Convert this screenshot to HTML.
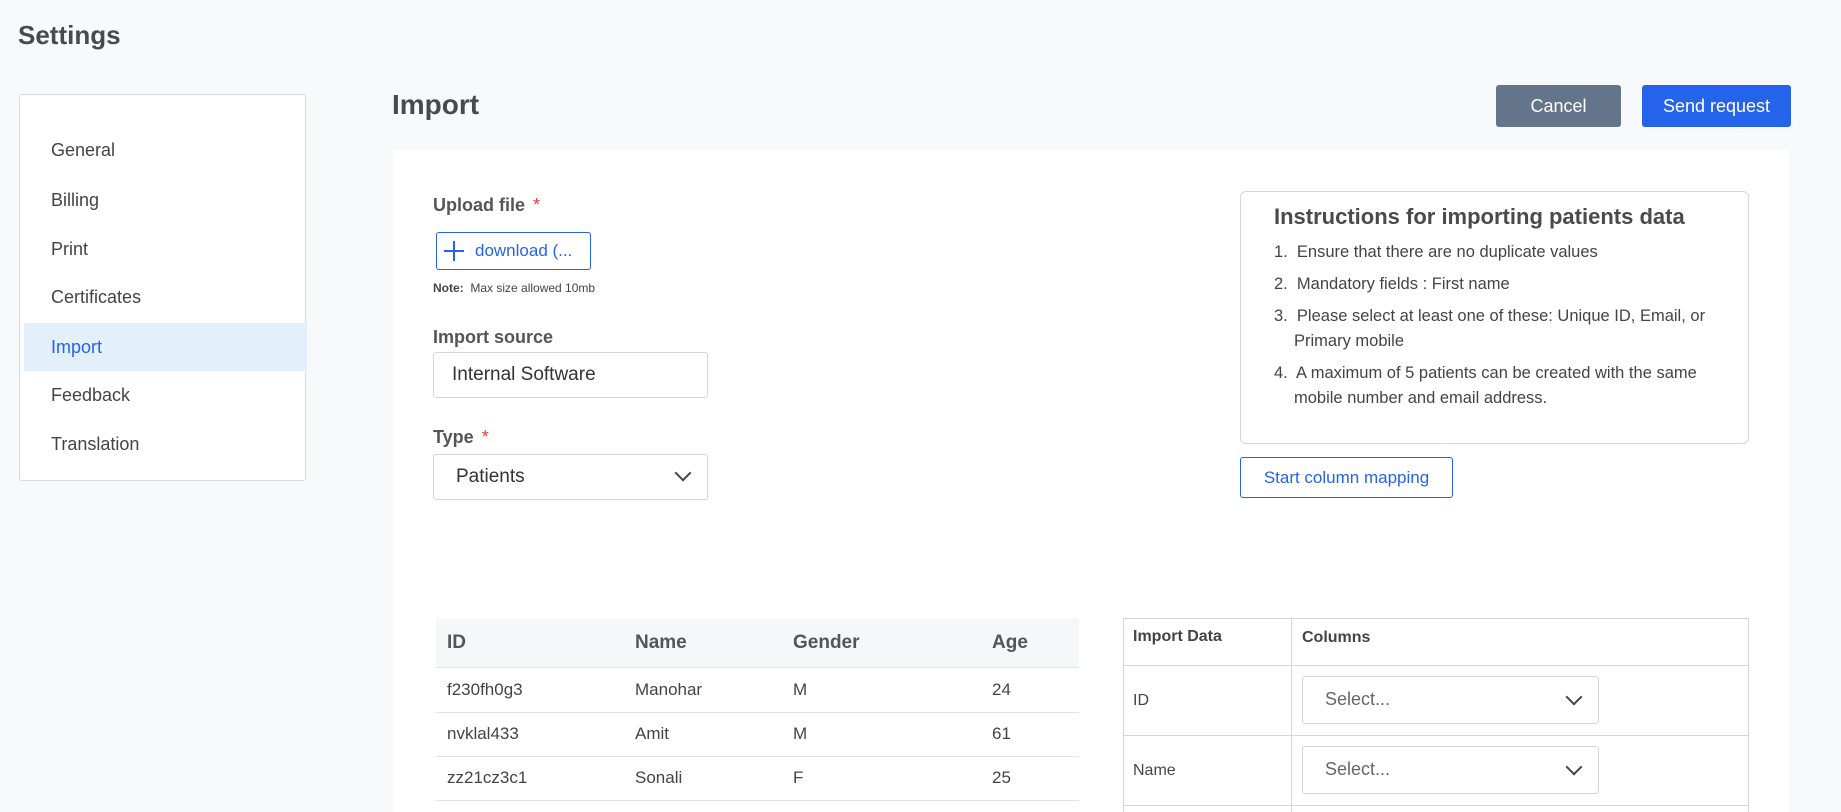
<!DOCTYPE html>
<html><head><meta charset="utf-8"><style>
*{box-sizing:border-box;margin:0;padding:0}
html,body{width:1841px;height:812px;overflow:hidden}
body{background:#f8f9fb;font-family:"Liberation Sans",sans-serif;color:#444;position:relative}
.a{position:absolute}
.menu div{position:absolute;left:4px;width:283px;height:48px;line-height:48px;padding-left:27px;font-size:18px;color:#444}
.lbl{font-size:18px;font-weight:bold;color:#555}
.star{color:#e53e3e;margin-left:8px;font-weight:normal}
.inp{border:1px solid #d6d6d6;border-radius:3px;background:#fff}
.chev{position:absolute;width:12px;height:12px;border-right:2px solid #444;border-bottom:2px solid #444;transform:rotate(45deg)}
</style></head><body>
<div class="a" style="left:18px;top:20px;font-size:26px;font-weight:bold;color:#4a4a4a">Settings</div>
<div class="a" style="left:19px;top:94px;width:287px;height:387px;background:#fff;border:1px solid #d6dbe2;border-radius:3px">
 <div class="menu">
  <div style="top:31px">General</div>
  <div style="top:81px">Billing</div>
  <div style="top:130px">Print</div>
  <div style="top:178px">Certificates</div>
  <div style="top:228px;background:#e3f0fc;color:#2563eb">Import</div>
  <div style="top:276px">Feedback</div>
  <div style="top:325px">Translation</div>
 </div>
</div>
<div class="a" style="left:392px;top:89px;font-size:28px;font-weight:bold;color:#4a4a4a">Import</div>
<div class="a" style="left:1496px;top:85px;width:125px;height:42px;background:#64748b;border-radius:3px;color:#fff;font-size:18px;text-align:center;line-height:42px">Cancel</div>
<div class="a" style="left:1642px;top:85px;width:149px;height:42px;background:#2563eb;border-radius:3px;color:#fff;font-size:18px;text-align:center;line-height:42px">Send request</div>
<div class="a" style="left:393px;top:150px;width:1396px;height:662px;background:#fff"></div>
<div class="a lbl" style="left:433px;top:195px">Upload file<span class="star">*</span></div>
<div class="a" style="left:436px;top:232px;width:155px;height:38px;border:1.5px solid #2563eb;border-radius:3px;background:#fff;color:#2563eb;font-size:17px;line-height:35px;padding-left:38px">download (...
 <svg class="a" style="left:6px;top:7px" width="22" height="22"><path d="M11 1V21M1 11H21" stroke="#2563eb" stroke-width="2"/></svg></div>
<div class="a" style="left:433px;top:281px;font-size:12px;color:#444"><b>Note:</b>&nbsp; Max size allowed 10mb</div>
<div class="a lbl" style="left:433px;top:327px">Import source</div>
<div class="a inp" style="left:433px;top:352px;width:275px;height:46px;font-size:19px;line-height:44px;padding-left:18px;color:#333">Internal Software</div>
<div class="a lbl" style="left:433px;top:427px">Type<span class="star">*</span></div>
<div class="a inp" style="left:433px;top:454px;width:275px;height:46px;font-size:19px;line-height:44px;padding-left:22px;color:#333">Patients<div class="chev" style="left:243px;top:12px"></div></div>
<div class="a" style="left:1240px;top:191px;width:509px;height:253px;border:1px solid #d6d6d6;border-radius:6px;background:#fff">
 <div class="a" style="left:33px;top:12px;font-size:22px;font-weight:bold;color:#4a4a4a">Instructions for importing patients data</div>
 <div class="a" style="left:33px;top:48px;font-size:16.5px;color:#444;line-height:25px;width:460px">
  <div style="height:32px">1.&nbsp; Ensure that there are no duplicate values</div>
  <div style="height:32px">2.&nbsp; Mandatory fields : First name</div>
  <div style="height:57px;padding-left:20px;text-indent:-20px">3.&nbsp; Please select at least one of these: Unique ID, Email, or Primary mobile</div>
  <div style="padding-left:20px;text-indent:-20px">4.&nbsp; A maximum of 5 patients can be created with the same mobile number and email address.</div>
 </div>
</div>
<div class="a" style="left:1240px;top:457px;width:213px;height:41px;border:1px solid #2563eb;border-radius:3px;background:#fff;color:#2563eb;font-size:17px;text-align:center;line-height:39px">Start column mapping</div>
<div class="a" style="left:436px;top:618px;width:643px;height:50px;background:#f6f7f9;border-bottom:1px solid #e3e3e3"></div>
<div class="a" style="left:436px;top:712px;width:643px;border-top:1px solid #e3e3e3"></div>
<div class="a" style="left:436px;top:756px;width:643px;border-top:1px solid #e3e3e3"></div>
<div class="a" style="left:436px;top:800px;width:643px;border-top:1px solid #e3e3e3"></div>
<div class="a" style="top:632px;left:447px;font-size:19px;font-weight:bold;color:#555">ID</div>
<div class="a" style="top:632px;left:635px;font-size:19px;font-weight:bold;color:#555">Name</div>
<div class="a" style="top:632px;left:793px;font-size:19px;font-weight:bold;color:#555">Gender</div>
<div class="a" style="top:632px;left:992px;font-size:19px;font-weight:bold;color:#555">Age</div>
<div class="a" style="top:680px;left:447px;font-size:17px">f230fh0g3</div><div class="a" style="top:680px;left:635px;font-size:17px">Manohar</div><div class="a" style="top:680px;left:793px;font-size:17px">M</div><div class="a" style="top:680px;left:992px;font-size:17px">24</div>
<div class="a" style="top:724px;left:447px;font-size:17px">nvklal433</div><div class="a" style="top:724px;left:635px;font-size:17px">Amit</div><div class="a" style="top:724px;left:793px;font-size:17px">M</div><div class="a" style="top:724px;left:992px;font-size:17px">61</div>
<div class="a" style="top:768px;left:447px;font-size:17px">zz21cz3c1</div><div class="a" style="top:768px;left:635px;font-size:17px">Sonali</div><div class="a" style="top:768px;left:793px;font-size:17px">F</div><div class="a" style="top:768px;left:992px;font-size:17px">25</div>
<div class="a" style="left:1123px;top:618px;width:626px;height:220px;border:1px solid #d6d6d6"></div>
<div class="a" style="left:1291px;top:618px;height:220px;border-left:1px solid #d6d6d6"></div>
<div class="a" style="left:1123px;top:665px;width:626px;border-top:1px solid #d6d6d6"></div>
<div class="a" style="left:1123px;top:735px;width:626px;border-top:1px solid #d6d6d6"></div>
<div class="a" style="left:1123px;top:805px;width:626px;border-top:1px solid #d6d6d6"></div>
<div class="a" style="left:1133px;top:628px;font-size:16px;font-weight:bold;color:#444">Import Data</div>
<div class="a" style="left:1302px;top:629px;font-size:16px;font-weight:bold;color:#444">Columns</div>
<div class="a" style="left:1133px;top:692px;font-size:16px">ID</div>
<div class="a" style="left:1133px;top:762px;font-size:16px">Name</div>
<div class="a inp" style="left:1302px;top:676px;width:297px;height:48px;font-size:18px;line-height:44px;padding-left:22px;color:#666">Select...<div class="chev" style="left:265px;top:14px"></div></div>
<div class="a inp" style="left:1302px;top:746px;width:297px;height:48px;font-size:18px;line-height:44px;padding-left:22px;color:#666">Select...<div class="chev" style="left:265px;top:14px"></div></div>
</body></html>
